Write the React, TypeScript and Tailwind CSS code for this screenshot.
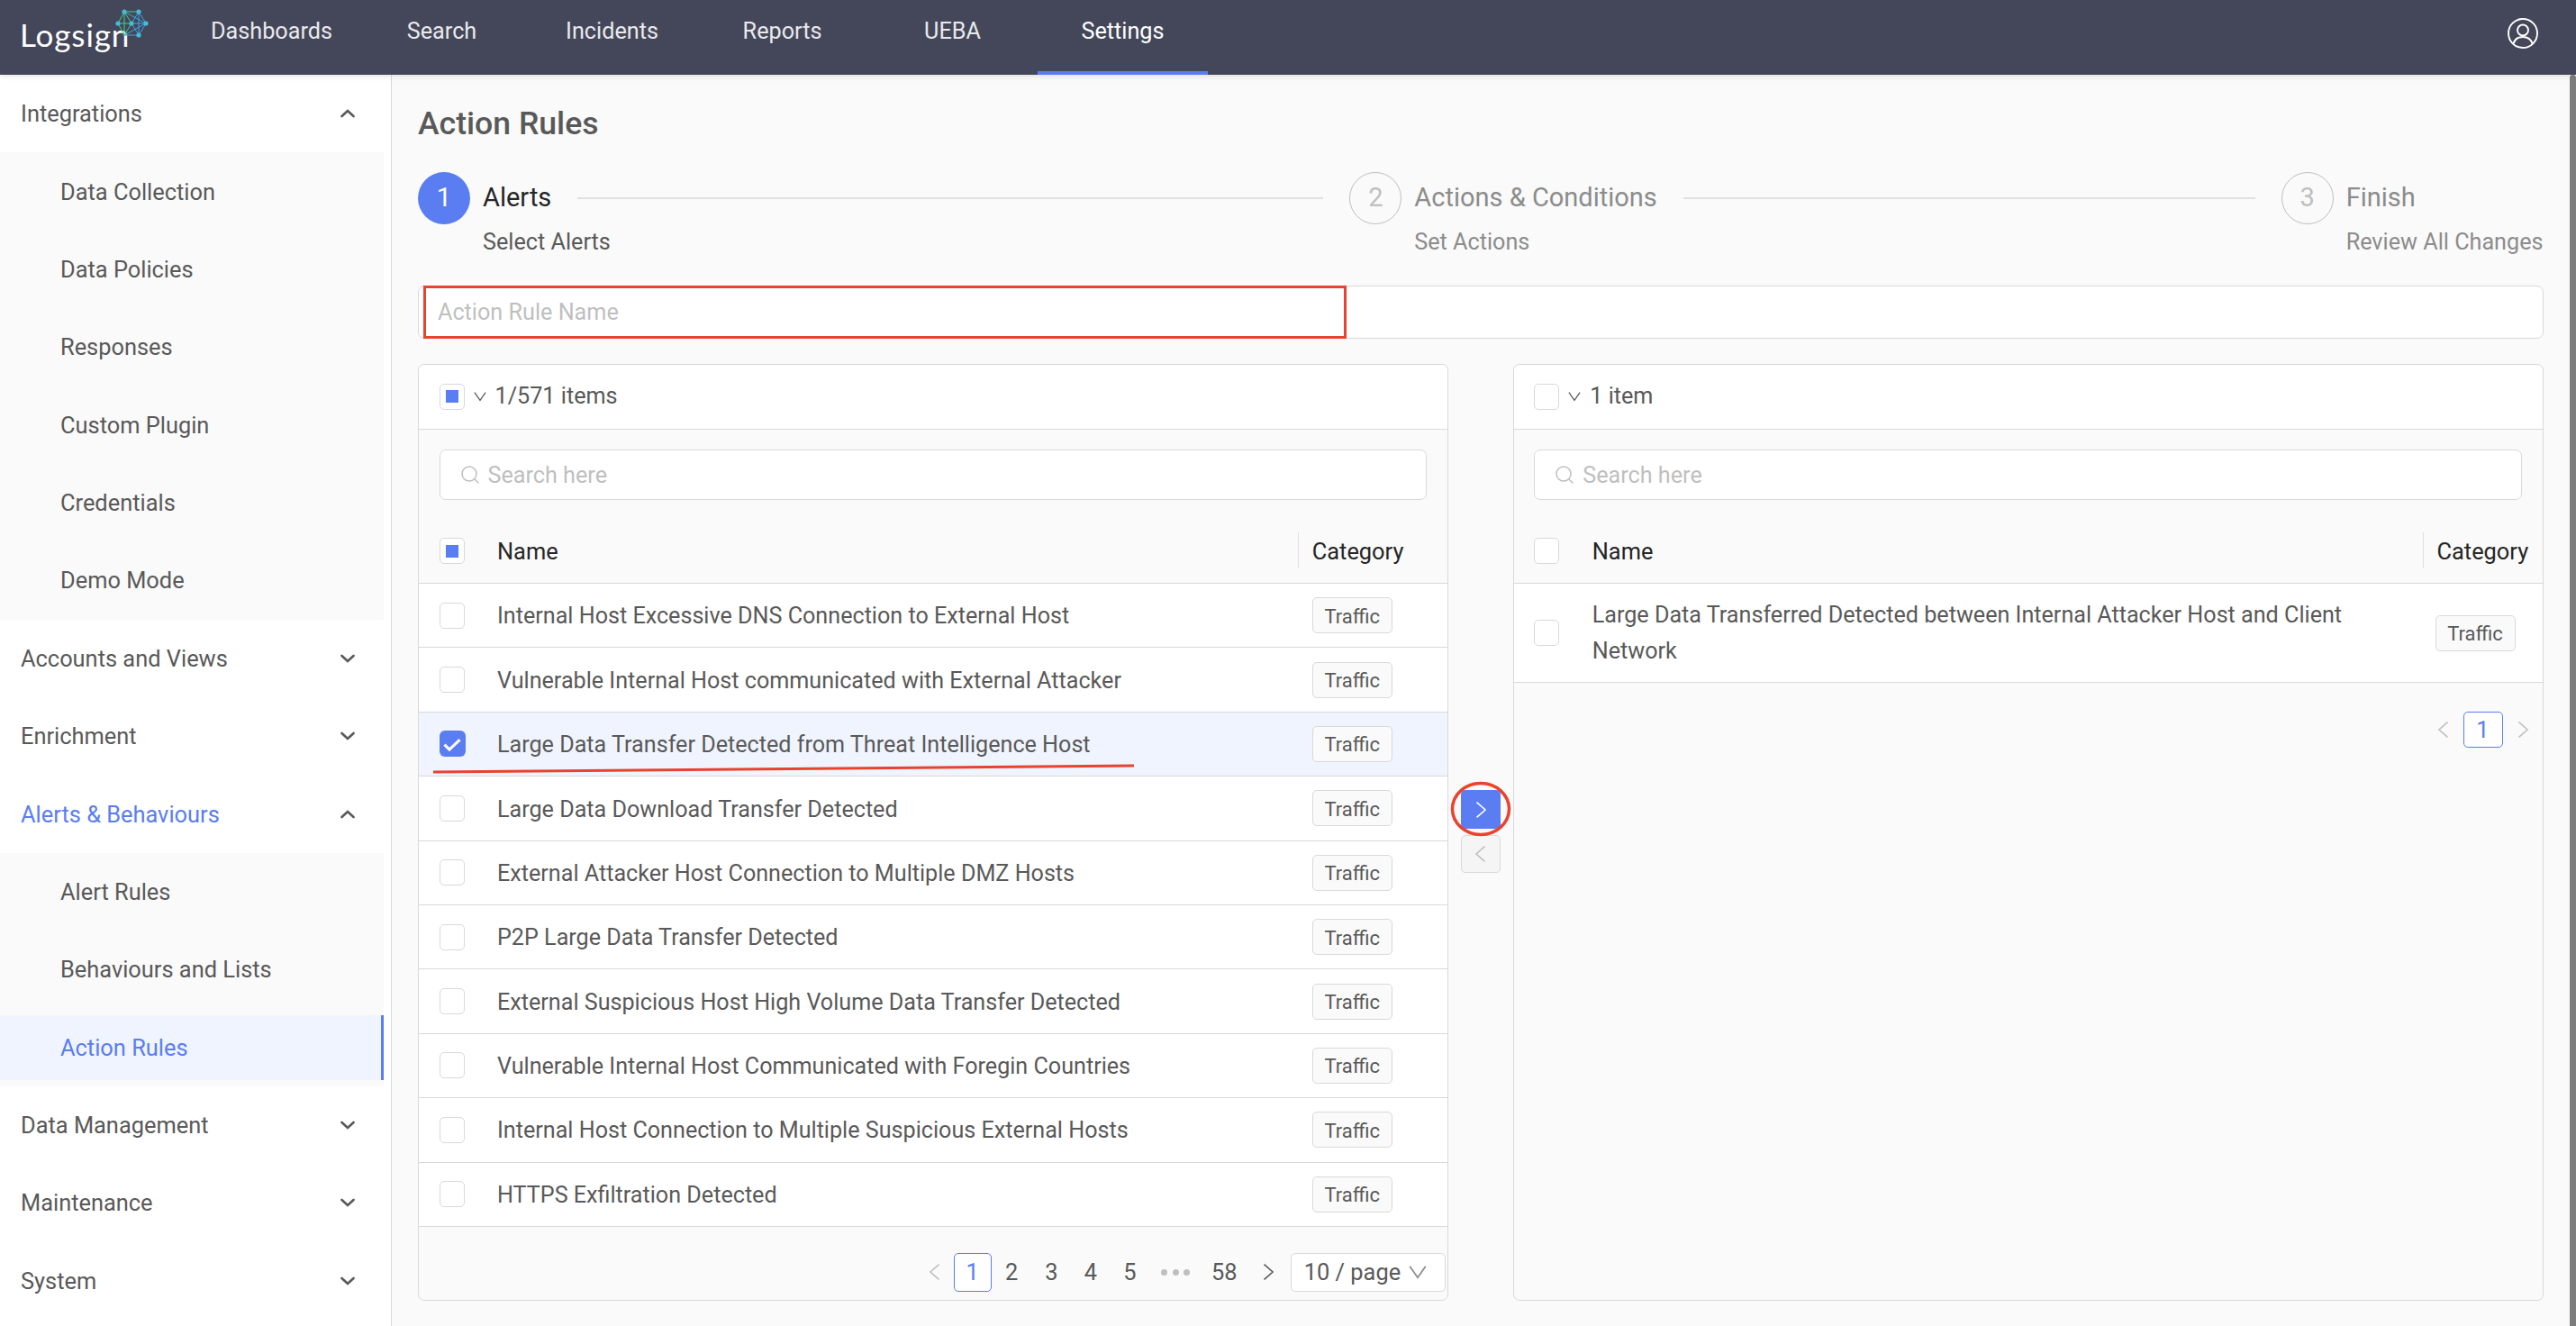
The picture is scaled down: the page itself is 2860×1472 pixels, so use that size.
import { Search } from 'lucide-react'

const topNav = ['Dashboards', 'Search', 'Incidents', 'Reports', 'UEBA', 'Settings']

const alertRows = [
  'Internal Host Excessive DNS Connection to External Host',
  'Vulnerable Internal Host communicated with External Attacker',
  'Large Data Transfer Detected from Threat Intelligence Host',
  'Large Data Download Transfer Detected',
  'External Attacker Host Connection to Multiple DMZ Hosts',
  'P2P Large Data Transfer Detected',
  'External Suspicious Host High Volume Data Transfer Detected',
  'Vulnerable Internal Host Communicated with Foregin Countries',
  'Internal Host Connection to Multiple Suspicious External Hosts',
  'HTTPS Exfiltration Detected',
]

function LogsignLogo() {
  return (
    <div className="relative w-[180px] h-[83px] shrink-0">
      <span className="absolute left-[22px] top-[16px] font-['Lato',sans-serif] text-[35px] leading-[44px] tracking-[0.9px] text-white">
        Logsign
      </span>
      <svg className="absolute left-[128px] top-[9px]" width="38" height="34" viewBox="0 0 38 34" fill="none">
        <g stroke="#3fd08a" strokeWidth="1">
          <path d="M10 4H26M3 17L10 4M3 17L10 30M10 4L18 17M10 30L18 17M3 17H18M10 4V30" />
        </g>
        <g stroke="#3aa6e8" strokeWidth="1">
          <path d="M26 4L34 17L26 30H10M18 17H34M26 4L18 17M26 30L18 17M26 4V30M10 4L34 17M10 30L34 17" />
        </g>
        <g fill="#44bcd8">
          <circle cx="10" cy="4" r="2.6" />
          <circle cx="26" cy="4" r="2.6" />
          <circle cx="3" cy="17" r="2.6" />
          <circle cx="18" cy="17" r="2.6" />
          <circle cx="34" cy="17" r="2.6" />
          <circle cx="26" cy="30" r="2.6" />
        </g>
      </svg>
    </div>
  )
}

function UserIcon() {
  return (
    <svg width="36" height="36" viewBox="0 0 36 36" fill="none" stroke="white" strokeWidth="1.9">
      <circle cx="18" cy="18" r="16" />
      <circle cx="18" cy="14.5" r="6" />
      <path d="M7.5 29.5C9 24.5 13 22 18 22s9 2.5 10.5 7.5" />
    </svg>
  )
}

function SideChevron({ up }: { up?: boolean }) {
  return (
    <svg width="16" height="10" viewBox="0 0 16 10" fill="none" stroke="#595959" strokeWidth="2.6" strokeLinecap="round">
      <path d={up ? 'M1.5 8L8 2l6.5 6' : 'M1.5 2L8 8l6.5-6'} />
    </svg>
  )
}

// thin pointed chevrons used by pagination and the transfer buttons
function Thin({ dir, color, size = 16 }: { dir: 'left' | 'right' | 'down'; color: string; size?: number }) {
  const d = dir === 'left' ? 'M12 .5L3.5 8l8.5 7.5' : dir === 'right' ? 'M4 .5L12.5 8L4 15.5' : 'M1 3l7 10 7-10'
  return (
    <svg width={size} height={size} viewBox="0 0 16 16" fill="none" stroke={color} strokeWidth="1.4">
      <path d={d} />
    </svg>
  )
}

function SideHeader({ label, open, active }: { label: string; open?: boolean; active?: boolean }) {
  return (
    <div className="flex items-center justify-between h-[72px] my-[7.2px] pl-[23px] pr-[32px]">
      <span className={active ? 'text-[#5a7df1]' : 'text-[#595959]'}>{label}</span>
      <SideChevron up={open} />
    </div>
  )
}

function SideItem({ label, active }: { label: string; active?: boolean }) {
  return (
    <div
      className={
        active
          ? 'flex items-center h-[72px] my-[7.2px] pl-[67px] bg-[#f0f4fe] text-[#5a7df1] border-r-[3px] border-[#5a7df1]'
          : 'flex items-center h-[72px] my-[7.2px] pl-[67px] text-[#595959]'
      }
    >
      {label}
    </div>
  )
}

function Sidebar() {
  return (
    <aside className="w-[435px] shrink-0 bg-white border-r border-[#d9d9d9] text-[25.4px]">
      <nav className="w-[426px] flex flex-col">
        <SideHeader label="Integrations" open />
        <div className="flex flex-col bg-[#fafafa]">
          <SideItem label="Data Collection" />
          <SideItem label="Data Policies" />
          <SideItem label="Responses" />
          <SideItem label="Custom Plugin" />
          <SideItem label="Credentials" />
          <SideItem label="Demo Mode" />
        </div>
        <SideHeader label="Accounts and Views" />
        <SideHeader label="Enrichment" />
        <SideHeader label="Alerts & Behaviours" open active />
        <div className="flex flex-col bg-[#fafafa]">
          <SideItem label="Alert Rules" />
          <SideItem label="Behaviours and Lists" />
          <SideItem label="Action Rules" active />
        </div>
        <SideHeader label="Data Management" />
        <SideHeader label="Maintenance" />
        <SideHeader label="System" />
      </nav>
    </aside>
  )
}

function Step({ n, title, desc, active, last }: { n: number; title: string; desc: string; active?: boolean; last?: boolean }) {
  return (
    <div className={last ? 'flex shrink-0' : 'flex flex-1 pr-[29px]'}>
      <div
        className={
          active
            ? 'w-[58px] h-[58px] shrink-0 rounded-full bg-[#5a7df1] text-white flex items-center justify-center text-[29px]'
            : 'w-[58px] h-[58px] shrink-0 rounded-full border border-[#bfbfbf] text-[#bfbfbf] flex items-center justify-center text-[29px]'
        }
      >
        {n}
      </div>
      <div className="flex-1 ml-[14px] flex flex-col">
        <div className="flex items-center h-[58px]">
          <span className={active ? 'text-[29px] text-[#262626]' : 'text-[29px] text-[#8c8c8c]'}>{title}</span>
          {!last && <div className="flex-1 h-[2px] ml-[29px] bg-[#e0e0e0]" />}
        </div>
        <div className={active ? 'text-[25.2px] leading-[40px] text-[#595959]' : 'text-[25.2px] leading-[40px] text-[#8c8c8c]'}>
          {desc}
        </div>
      </div>
    </div>
  )
}

function Checkbox({ state }: { state?: 'partial' | 'checked' }) {
  if (state === 'checked') {
    return (
      <div className="w-[29px] h-[29px] shrink-0 rounded-[6px] bg-[#5a7df1] flex items-center justify-center">
        <svg width="22" height="22" viewBox="0 0 18 18" fill="none" stroke="white" strokeWidth="2.6">
          <path d="M2 9.5L6.5 14L16 5" />
        </svg>
      </div>
    )
  }
  return (
    <div className="w-[28px] h-[29px] shrink-0 rounded-[5px] bg-white border border-[#d9d9d9] flex items-center justify-center">
      {state === 'partial' && <div className="w-[14px] h-[14px] bg-[#5a7df1]" />}
    </div>
  )
}

function Tag() {
  return (
    <div className="w-[89px] h-[40px] pt-[2px] rounded-[5px] border border-[#d9d9d9] bg-[#fafafa] flex items-center justify-center text-[22px] text-[#595959]">
      Traffic
    </div>
  )
}

function PanelTop({ check, count, catWidth }: { check?: 'partial'; count: string; catWidth: string }) {
  return (
    <>
      <div className="h-[72px] bg-white border-b border-[#d9d9d9] rounded-t-[7px] flex items-center pl-[22.5px] pb-[1px]">
        <Checkbox state={check} />
        <span className="ml-[10px]">
          <Thin dir="down" color="#595959" size={14} />
        </span>
        <span className="ml-[10px] text-[25.2px] text-[#595959]">{count}</span>
      </div>
      <div className="px-[22.5px] pt-[22px] pb-[21px]">
        <div className="h-[56px] bg-white border border-[#d9d9d9] rounded-[7px] flex items-center pl-[21px]">
          <Search size={24} strokeWidth={1.5} className="text-[#bfbfbf]" />
          <span className="ml-[8px] pt-[2px] text-[25.2px] text-[#bfbfbf]">Search here</span>
        </div>
      </div>
      <div className="h-[72px] flex items-center border-b border-[#d9d9d9] pl-[22.5px] text-[25.4px] text-[#262626]">
        <Checkbox state={check} />
        <span className="ml-[36.5px] pt-[2px] flex-1">Name</span>
        <div className={catWidth + ' flex items-center'}>
          <div className="w-px h-[40px] bg-[#e0e0e0] mr-[15px]" />
          <span className="pt-[2px]">Category</span>
        </div>
      </div>
    </>
  )
}

function LeftPanel() {
  return (
    <div className="flex-1 border border-[#d9d9d9] rounded-[7px] flex flex-col">
      <PanelTop check="partial" count="1/571 items" catWidth="w-[166px]" />
      {alertRows.map((name, i) => (
        <div
          key={name}
          className={
            i === 2
              ? 'relative h-[71.4px] flex items-center bg-[#f0f4fe] border-b border-[#d9d9d9] pl-[22.5px]'
              : 'relative h-[71.4px] flex items-center bg-white border-b border-[#d9d9d9] pl-[22.5px]'
          }
        >
          <Checkbox state={i === 2 ? 'checked' : undefined} />
          <span className={i === 2 ? 'ml-[35.5px] pt-[2px] flex-1 text-[25.15px] text-[#595959]' : 'ml-[36.5px] pt-[2px] flex-1 text-[25.15px] text-[#595959]'}>{name}</span>
          <div className="w-[166px] pl-[16px]">
            <Tag />
          </div>
          {i === 2 && (
            <svg className="absolute left-[16px] top-[56px]" width="780" height="14" viewBox="0 0 780 14" fill="none">
              <path d="M0 10L778 3" stroke="#e8432e" strokeWidth="3" />
            </svg>
          )}
        </div>
      ))}
      <div className="flex-1 flex items-center justify-end pr-[2px] pt-[20px] text-[25.4px] text-[#595959]">
        <div className="w-[42px] flex justify-center">
          <Thin dir="left" color="#bfbfbf" size={18} />
        </div>
        <div className="w-[42px] h-[43px] rounded-[5px] border border-[#5a7df1] bg-white text-[#5a7df1] flex items-center justify-center">1</div>
        <div className="w-[45px] text-center">2</div>
        <div className="w-[43.5px] text-center">3</div>
        <div className="w-[43.5px] text-center">4</div>
        <div className="w-[43.5px] text-center">5</div>
        <div className="w-[58px] flex justify-center gap-[5.5px]">
          <i className="w-[7px] h-[7px] rounded-full bg-[#bfbfbf]" />
          <i className="w-[7px] h-[7px] rounded-full bg-[#bfbfbf]" />
          <i className="w-[7px] h-[7px] rounded-full bg-[#bfbfbf]" />
        </div>
        <div className="w-[50px] text-center">58</div>
        <div className="w-[44px] ml-[2px] mr-[2.5px] flex justify-center">
          <Thin dir="right" color="#595959" size={18} />
        </div>
        <div className="w-[172px] h-[43px] bg-white border border-[#d9d9d9] rounded-[5px] flex items-center justify-between pl-[14px] pr-[20px]">
          10 / page
          <Thin dir="down" color="#8c8c8c" size={20} />
        </div>
      </div>
    </div>
  )
}

function RightPanel() {
  return (
    <div className="flex-1 border border-[#d9d9d9] rounded-[7px] flex flex-col">
      <PanelTop count="1 item" catWidth="w-[133px]" />
      <div className="h-[110px] flex items-center bg-white border-b border-[#d9d9d9] pl-[22.5px]">
        <Checkbox />
        <span className="ml-[36.5px] flex-1 pr-[16px] text-[25.15px] leading-[40px] text-[#595959]">
          Large Data Transferred Detected between Internal Attacker Host and Client Network
        </span>
        <div className="w-[133px] pl-[14px]">
          <Tag />
        </div>
      </div>
      <div className="flex items-center justify-end mt-[32px] pr-[13px] text-[25.4px]">
        <Thin dir="left" color="#bfbfbf" size={18} />
        <div className="mx-[13px] w-[44px] h-[40px] rounded-[5px] border border-[#5a7df1] bg-white text-[#5a7df1] flex items-center justify-center">1</div>
        <Thin dir="right" color="#bfbfbf" size={18} />
      </div>
    </div>
  )
}

export default function App() {
  return (
    <div className="relative h-screen w-screen overflow-hidden flex flex-col bg-[#fafafa] font-['Roboto',sans-serif]">
      <header className="relative z-10 h-[83px] shrink-0 bg-[#444759] flex items-center shadow-[0_2px_6px_rgba(0,0,0,0.1)]">
        <LogsignLogo />
        <nav className="flex h-full ml-[27px]">
          {topNav.map((item) => (
            <div
              key={item}
              className={
                item === 'Settings'
                  ? 'w-[189px] h-full flex items-center justify-center pb-[10px] text-[25.2px] text-white border-b-[4px] border-[#5a7df1]'
                  : 'w-[189px] h-full flex items-center justify-center pb-[10px] text-[25.2px] text-[#e9e9ec] border-b-[4px] border-transparent'
              }
            >
              {item}
            </div>
          ))}
        </nav>
        <div className="ml-auto mr-[41px] flex mb-[10px]">
          <UserIcon />
        </div>
      </header>
      <div className="flex-1 flex min-h-0">
        <Sidebar />
        <main className="flex-1 min-w-0 pl-[29px] pr-[36.5px] pt-[29px]">
          <h1 className="h-[50px] leading-[50px] text-[35.6px] font-medium text-[#595959]">Action Rules</h1>
          <div className="flex mt-[29px]">
            <Step n={1} title="Alerts" desc="Select Alerts" active />
            <Step n={2} title="Actions & Conditions" desc="Set Actions" />
            <Step n={3} title="Finish" desc="Review All Changes" last />
          </div>
          <div className="relative mt-[28px] h-[59px] bg-white border border-[#d9d9d9] rounded-[7px] flex items-center pl-[21px] text-[25.2px] text-[#bfbfbf]">
            Action Rule Name
            <div className="absolute -left-px -top-px ml-[6px] w-[1025px] h-[59px] border-[3.5px] border-[#e8432e]" />
          </div>
          <div className="flex mt-[28px] h-[1040px]">
            <LeftPanel />
            <div className="relative w-[72px] shrink-0 flex flex-col items-center pt-[473px]">
              <div className="relative z-10 w-[44px] h-[43px] rounded-[5px] bg-[#5a7df1] flex items-center justify-center">
                <Thin dir="right" color="white" size={18} />
              </div>
              <div className="mt-[7px] w-[44px] h-[42px] rounded-[5px] bg-[#f5f5f5] border border-[#d9d9d9] flex items-center justify-center">
                <Thin dir="left" color="#bfbfbf" size={18} />
              </div>
              <svg className="absolute z-20 left-[1px] top-[463px]" width="70" height="62" viewBox="0 0 70 62" fill="none">
                <ellipse cx="35" cy="31" rx="31.5" ry="28.5" stroke="#e8432e" strokeWidth="3.5" />
              </svg>
            </div>
            <RightPanel />
          </div>
        </main>
      </div>
      <div className="absolute right-0 top-[83px] bottom-0 w-[7px] rounded-t-[4px] bg-[#7d7d7d]" />
    </div>
  )
}
